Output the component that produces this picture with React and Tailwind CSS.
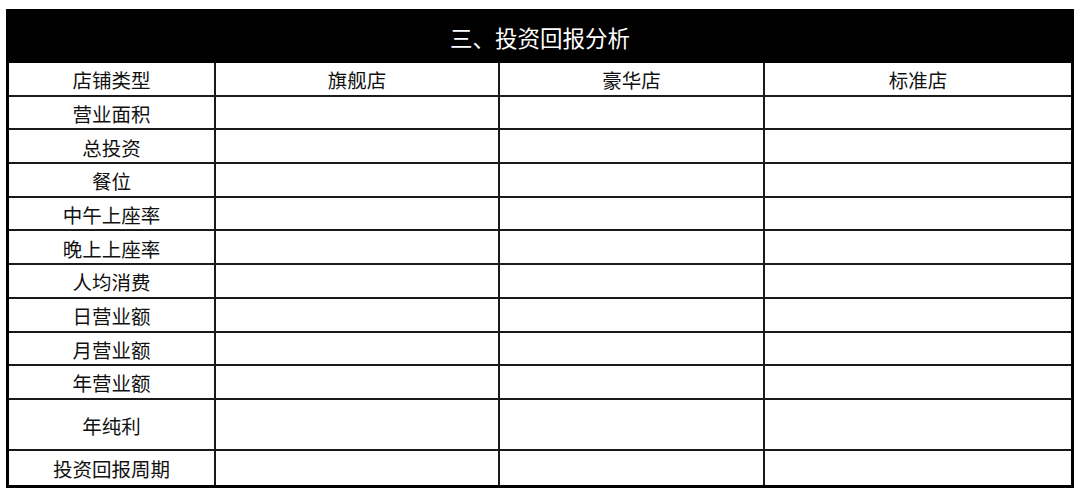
const font = { fontFamily: '"Noto Sans CJK SC", "Noto Sans", sans-serif' }

const columns = ['旗舰店', '豪华店', '标准店']

const rows = [
  { label: '营业面积' },
  { label: '总投资' },
  { label: '餐位' },
  { label: '中午上座率' },
  { label: '晚上上座率' },
  { label: '人均消费' },
  { label: '日营业额' },
  { label: '月营业额' },
  { label: '年营业额' },
  { label: '年纯利', tall: true },
  { label: '投资回报周期', last: true },
]

function Row({ label, cells, tall, last }) {
  const h = tall ? 'h-[51px]' : last ? 'h-[34px]' : 'h-[33.7px]'
  const b = last ? '' : 'border-b-2 border-[#1a1a1a]'
  return (
    <div className={`grid grid-cols-[207px_284px_265px_1fr] ${h} ${b}`}>
      <div className="flex items-center justify-center border-r-2 border-[#1a1a1a] pt-[2px] text-[19.5px] text-[#111]">
        {label}
      </div>
      {cells.map((c, i) => (
        <div
          key={i}
          className={`flex items-center justify-center pt-[2px] text-[19.5px] text-[#111] ${i < 2 ? 'border-r-2 border-[#1a1a1a]' : ''}`}
        >
          {c}
        </div>
      ))}
    </div>
  )
}

export default function App() {
  return (
    <div className="w-[1080px] h-[496px] bg-white pl-[6px] pt-[9px]" style={font}>
      <div className="w-[1068px] border-x-[3px] border-b-[3px] border-black bg-white">
        <div className="-mx-[3px] flex h-[54px] items-center justify-center bg-black pt-[3px] text-[22.5px] text-white">
          三、投资回报分析
        </div>
        <Row label="店铺类型" cells={columns} />
        {rows.map((r) => (
          <Row key={r.label} label={r.label} cells={['', '', '']} tall={r.tall} last={r.last} />
        ))}
      </div>
    </div>
  )
}
